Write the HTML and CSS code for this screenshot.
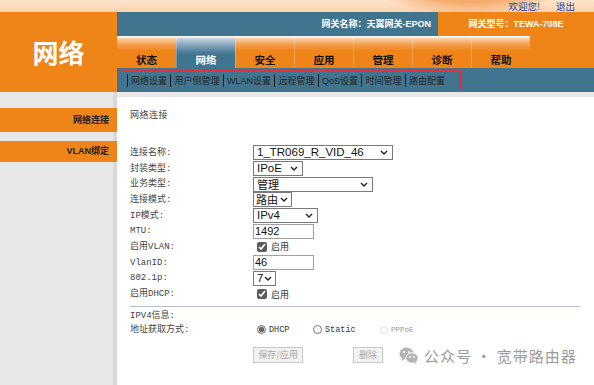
FILE: index.html
```html
<!DOCTYPE html>
<html>
<head>
<meta charset="utf-8">
<link rel="stylesheet" href="styles.css">
</head>
<body>
<div class="page">
  <div class="topbar">
    <a class="toplink">欢迎您!</a>
    <a class="toplink">退出</a>
  </div>
  <div class="header">
    <div class="logo">网络</div>
    <div class="headmain">
      <div class="inforow">
        <div class="gwname">网关名称：天翼网关-EPON</div>
        <div class="gwmodel">网关型号：TEWA-708E</div>
      </div>
      <div class="tabrow">
        <div class="tab">状态</div>
        <div class="tab active">网络</div>
        <div class="tab">安全</div>
        <div class="tab">应用</div>
        <div class="tab">管理</div>
        <div class="tab">诊断</div>
        <div class="tab">帮助</div>
        <div class="tabfill"></div>
      </div>
      <div class="subrow">
        <div class="subbox">
          <span class="sep"></span><span class="sub">网络设置</span>
          <span class="sep"></span><span class="sub">用户侧管理</span>
          <span class="sep"></span><span class="sub">WLAN设置</span>
          <span class="sep"></span><span class="sub">远程管理</span>
          <span class="sep"></span><span class="sub">QoS设置</span>
          <span class="sep"></span><span class="sub">时间管理</span>
          <span class="sep"></span><span class="sub">路由配置</span>
        </div>
      </div>
    </div>
  </div>
  <div class="main">
    <div class="sidebar">
      <div class="side-item">网络连接</div>
      <div class="side-item second">VLAN绑定</div>
    </div>
    <div class="content">
      <div class="title">网络连接</div>
      <div class="form">
        <div class="lbl">连接名称:</div>
        <div class="ctl"><div class="sel w140"><span class="val">1_TR069_R_VID_46</span><svg class="chev" width="8" height="5" viewBox="0 0 8 5"><path d="M1 1 L4 4 L7 1" fill="none" stroke="#222" stroke-width="1.4"/></svg></div></div>
        <div class="lbl">封装类型:</div>
        <div class="ctl"><div class="sel w50"><span class="val">IPoE</span><svg class="chev" width="8" height="5" viewBox="0 0 8 5"><path d="M1 1 L4 4 L7 1" fill="none" stroke="#222" stroke-width="1.4"/></svg></div></div>
        <div class="lbl">业务类型:</div>
        <div class="ctl"><div class="sel w120"><span class="val cjk">管理</span><svg class="chev" width="8" height="5" viewBox="0 0 8 5"><path d="M1 1 L4 4 L7 1" fill="none" stroke="#222" stroke-width="1.4"/></svg></div></div>
        <div class="lbl">连接模式:</div>
        <div class="ctl"><div class="sel w39"><span class="val cjk">路由</span><svg class="chev" width="8" height="5" viewBox="0 0 8 5"><path d="M1 1 L4 4 L7 1" fill="none" stroke="#222" stroke-width="1.4"/></svg></div></div>
        <div class="lbl">IP模式:</div>
        <div class="ctl"><div class="sel w65"><span class="val">IPv4</span><svg class="chev" width="8" height="5" viewBox="0 0 8 5"><path d="M1 1 L4 4 L7 1" fill="none" stroke="#222" stroke-width="1.4"/></svg></div></div>
        <div class="lbl">MTU:</div>
        <div class="ctl"><div class="txt">1492</div></div>
        <div class="lbl">启用VLAN:</div>
        <div class="ctl"><label class="chk"><input type="checkbox" checked><span>启用</span></label></div>
        <div class="lbl">VlanID:</div>
        <div class="ctl"><div class="txt">46</div></div>
        <div class="lbl">802.1p:</div>
        <div class="ctl"><div class="sel w23"><span class="val">7</span><svg class="chev" width="8" height="5" viewBox="0 0 8 5"><path d="M1 1 L4 4 L7 1" fill="none" stroke="#222" stroke-width="1.4"/></svg></div></div>
        <div class="lbl">启用DHCP:</div>
        <div class="ctl"><label class="chk"><input type="checkbox" checked><span>启用</span></label></div>
      </div>
      <div class="rule"></div>
      <div class="lbl ipv4">IPV4信息:</div>
      <div class="radiorow">
        <div class="lbl rlbl">地址获取方式:</div>
        <label class="radio r1"><input type="radio" name="m" checked><span>DHCP</span></label>
        <label class="radio r2"><input type="radio" name="m"><span>Static</span></label>
        <label class="radio r3"><input type="radio" name="m" disabled><span>PPPoE</span></label>
      </div>
      <div class="btnrow">
        <button class="btn b1" disabled>保存/应用</button>
        <button class="btn b2" disabled>删除</button>
      </div>
    </div>
  </div>
  <div class="watermark">
    <svg class="wx" width="20" height="17" viewBox="0 0 20 17">
      <ellipse cx="7.5" cy="6.5" rx="7" ry="6" fill="#b4b4b4"/>
      <path d="M3 11 L2 14 L6 12 Z" fill="#b4b4b4"/>
      <ellipse cx="13" cy="11" rx="6.2" ry="5.2" fill="#b4b4b4" stroke="#fff" stroke-width="1"/>
      <path d="M16.5 15 L18 17 L14.5 15.8 Z" fill="#b4b4b4"/>
      <circle cx="5" cy="5" r="1" fill="#fff"/>
      <circle cx="10" cy="5" r="1" fill="#fff"/>
      <circle cx="11" cy="10" r="0.9" fill="#fff"/>
      <circle cx="15" cy="10" r="0.9" fill="#fff"/>
    </svg>
    <span class="wmtext">公众号 · 宽带路由器</span>
  </div>
</div>
</body>
</html>
```
FILE: styles.css
```css
* { box-sizing: border-box; }
html, body { margin: 0; padding: 0; }
body {
  width: 594px;
  height: 385px;
  overflow: hidden;
  background: #e8e8e8;
  font-family: "Liberation Sans", "Noto Sans CJK SC", sans-serif;
}
.page {
  position: relative;
  width: 594px;
  height: 385px;
  display: flex;
  flex-direction: column;
}
.topbar {
  height: 12px;
  flex: none;
  background:
    radial-gradient(ellipse 95px 30px at 470px -14px, #f39443 0%, #f6ab6c 55%, rgba(251, 210, 173, 0) 100%),
    linear-gradient(#fde4cc, #fbd2ad);
  display: flex;
  justify-content: flex-end;
  align-items: center;
  padding-right: 19px;
  gap: 16px;
}
.toplink {
  font-size: 9.5px;
  line-height: 11px;
  color: #1d3fae;
  font-family: "Noto Sans CJK SC", sans-serif;
}
.header {
  height: 80px;
  flex: none;
  display: flex;
}
.logo {
  width: 117px;
  background: #ef8419;
  color: #fff;
  font-family: "Noto Sans CJK SC", sans-serif;
  font-weight: 700;
  font-size: 26px;
  display: flex;
  align-items: center;
  justify-content: center;
  padding-bottom: 2px;
}
.headmain {
  flex: 1;
  display: flex;
  flex-direction: column;
}
.inforow {
  height: 24px;
  display: flex;
  color: #fff;
  font-weight: 700;
  font-size: 9px;
  line-height: 24px;
}
.gwname {
  width: 321px;
  background: #41758f;
  text-align: right;
  padding-right: 7px;
}
.gwmodel {
  flex: 1;
  background: #ef8419;
  text-align: center;
}
.tabrow {
  height: 32px;
  display: flex;
}
.tab {
  width: 59px;
  background: linear-gradient(#fff 0, #fff 1px, #fcd6b0 2px, #f5a155 8px, #ef8419 15px);
  text-align: center;
  font-family: "Noto Sans CJK SC", sans-serif;
  font-weight: 700;
  font-size: 10.5px;
  line-height: 14px;
  padding-top: 17px;
  color: #111;
  border-left: 1px solid rgba(255, 255, 255, 0.25);
}
.tab:first-child { border-left: none; }
.tab.active {
  background: linear-gradient(#fff 0, #fff 1px, #c9d8e3 2px, #86a6bc 9px, #41758f 18px);
  color: #fff;
}
.tabfill {
  flex: 1;
  background: #ef8419;
}
.subrow {
  height: 24px;
  background: #41758f;
  padding: 2px 0 0 4px;
}
.subbox {
  width: 340px;
  height: 20px;
  border: 1.5px solid #e0303f;
  display: flex;
  align-items: center;
  padding-left: 1.5px;
  font-family: "Liberation Sans", "Noto Sans CJK SC", sans-serif;
  font-size: 9px;
  color: #262626;
}
.sep {
  width: 1px;
  height: 13px;
  background: #1c1c1c;
  margin: 0 3.5px 0 3px;
}
.main {
  flex: 1;
  display: flex;
}
.sidebar {
  width: 117px;
  background: linear-gradient(to right, #e8e8e8 113px, #d9d9d9 113px);
  padding-top: 16px;
}
.side-item {
  height: 24px;
  background: #ef8419;
  text-align: right;
  padding-right: 8px;
  line-height: 24px;
  font-weight: 700;
  font-size: 9px;
  color: #222;
}
.side-item.second {
  margin-top: 9px;
  height: 21px;
  line-height: 21px;
}
.content {
  flex: 1;
  margin-top: 5px;
  background: #fff;
  padding: 11px 0 0 13px;
}
.title {
  font-family: "Noto Sans CJK SC", sans-serif;
  font-size: 9px;
  line-height: 14px;
  color: #444;
  letter-spacing: 0.5px;
}
.form {
  margin-top: 23px;
  display: grid;
  grid-template-columns: 123px 1fr;
  grid-auto-rows: 15.7px;
  align-items: center;
}
.lbl {
  font-family: "Liberation Mono", "Noto Sans CJK SC", monospace;
  font-size: 9px;
  line-height: 12px;
  color: #444;
}
.ctl {
  display: flex;
  align-items: center;
  height: 15.7px;
}
.sel {
  height: 15px;
  display: flex;
  align-items: center;
  font-family: "Liberation Sans", "Noto Sans CJK SC", sans-serif;
  font-size: 11.5px;
  border: 1px solid #7a7a7a;
  padding: 0 4px 0 3px;
  background: #fff;
  color: #111;
  overflow: hidden;
}
.val { white-space: nowrap; line-height: 13px; }
.val.cjk { font-family: "Noto Sans CJK SC", sans-serif; font-size: 11px; }
.chev { margin-left: auto; flex: none; }
.w140 { width: 140px; }
.w50 { width: 50px; }
.w120 { width: 120px; }
.w39 { width: 39px; padding-left: 2px; padding-right: 3px; }
.w65 { width: 65px; }
.w23 { width: 23px; padding-left: 3px; padding-right: 3px; }
.txt {
  width: 61px;
  height: 15px;
  border: 1px solid #a0a0a0;
  padding: 0 1px;
  font-family: "Liberation Sans", sans-serif;
  font-size: 11px;
  line-height: 13px;
  color: #111;
  background: #fff;
}
.chk {
  display: flex;
  align-items: center;
  font-family: "Noto Sans CJK SC", sans-serif;
  font-size: 9px;
  color: #333;
}
.chk input {
  width: 10px;
  height: 10px;
  margin: 0 4px 0 4px;
  accent-color: #5c5c5c;
}
.rule {
  width: 450px;
  margin-top: 4px;
  border-top: 1px solid #b6bfd3;
}
.ipv4 {
  margin-top: 3px;
  line-height: 13px;
}
.radiorow {
  display: flex;
  align-items: center;
  height: 14px;
}
.rlbl { width: 123px; }
.radio {
  display: flex;
  align-items: center;
  font-family: "Liberation Mono", monospace;
  font-size: 8.5px;
  color: #333;
}
.radio input {
  width: 9px;
  height: 9px;
  margin: 0 3px 0 0;
  accent-color: #666;
}
.r1 { margin-left: 4px; width: 56px; }
.r2 { width: 67px; }
.r3 { color: #999; font-size: 7.5px; }
.r3 input { width: 8px; height: 8px; opacity: 0.6; }
.btnrow {
  display: flex;
  gap: 50px;
  padding-left: 123px;
  margin-top: 10px;
}
.btn {
  height: 16px;
  padding: 0;
  font-family: "Noto Sans CJK SC", sans-serif;
  font-size: 9px;
  color: #a8a8a8;
  background: #f2f2f2;
  border: 1px solid #c8c8c8;
  border-radius: 0;
}
.b1 { width: 50px; }
.b2 { width: 30px; }
.watermark {
  position: absolute;
  left: 399px;
  top: 345px;
  display: flex;
  align-items: center;
  gap: 5px;
}
.wmtext {
  font-family: "Noto Sans CJK SC", sans-serif;
  font-size: 15px;
  letter-spacing: 1px;
  color: #9c9c9c;
}
```
